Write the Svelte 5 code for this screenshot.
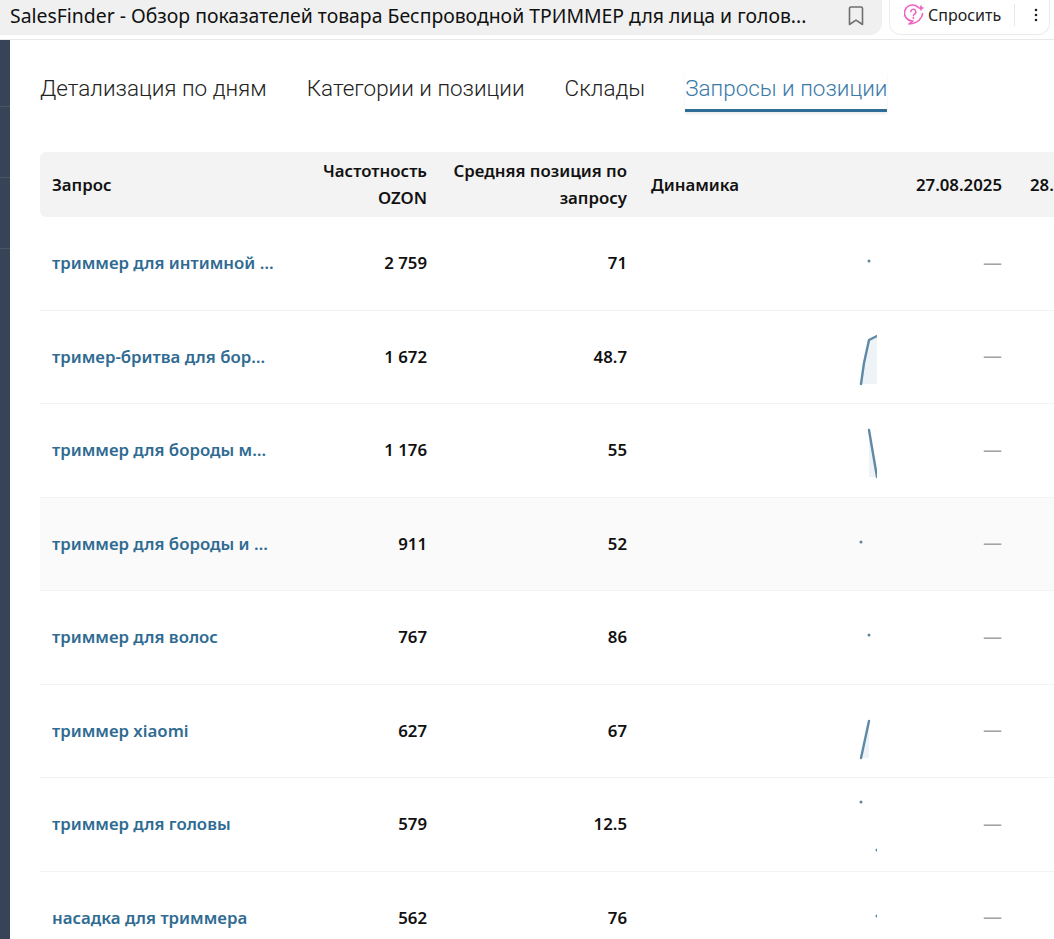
<script lang="ts">
	const tabs = ['Детализация по дням', 'Категории и позиции', 'Склады', 'Запросы и позиции'];
	const activeTab = 'Запросы и позиции';

	// spark: points in a 27x60 box, a single point is drawn as a dot
	const rows = [
		{ query: 'триммер для интимной …', freq: '2 759', pos: '71', spark: [[19, 28]] },
		{ query: 'тример-бритва для бор…', freq: '1 672', pos: '48.7', spark: [[11, 57], [14, 36], [19, 13], [27, 9]] },
		{ query: 'триммер для бороды м…', freq: '1 176', pos: '55', spark: [[19, 10], [27, 57]] },
		{ query: 'триммер для бороды и …', freq: '911', pos: '52', spark: [[11, 28]], hover: true },
		{ query: 'триммер для волос', freq: '767', pos: '86', spark: [[19, 28]] },
		{ query: 'триммер xiaomi', freq: '627', pos: '67', spark: [[11, 57], [19, 20]] },
		{ query: 'триммер для головы', freq: '579', pos: '12.5', dots: [[11, 8], [27, 56]] },
		{ query: 'насадка для триммера', freq: '562', pos: '76', spark: [[27, 28]] }
	];

	const line = (pts: number[][]) => pts.map((p) => p.join(',')).join(' ');
	const area = (pts: number[][]) =>
		`${line(pts)} ${pts[pts.length - 1][0]},57 ${pts[0][0]},57`;
</script>

<div class="topbar">
	<div class="title-pill">
		<span class="page-title">SalesFinder - Обзор показателей товара Беспроводной ТРИММЕР для лица и голов...</span>
		<svg class="bookmark" width="16" height="20" viewBox="0 0 16 20" aria-hidden="true">
			<path d="M1.5 2.5 a1.5 1.5 0 0 1 1.5-1.5 h10 a1.5 1.5 0 0 1 1.5 1.5 V18.5 L8 14.2 L1.5 18.5 Z" fill="none" stroke="#6f6f6f" stroke-width="1.6" stroke-linejoin="round" />
		</svg>
	</div>
	<div class="ask-pill">
		<svg width="21" height="22" viewBox="0 0 21 22" aria-hidden="true">
			<path d="M14 3.2 A8 8 0 1 0 9 17 L5 20 C9 20 15 18 17.5 13 Q18.500 11 18.500 9.500" fill="none" stroke="#f062c0" stroke-width="1.6" stroke-linecap="round" stroke-linejoin="round" />
			<path d="M6.800 7.800 a2.500 2.500 0 1 1 3.600 2.300 q-1 .5 -1 1.700" fill="none" stroke="#f062c0" stroke-width="1.500" stroke-linecap="round" />
			<circle cx="9.400" cy="14" r="1" fill="#f062c0" />
			<path d="M17 0.500 L18 3 L20.500 4 L18 5 L17 7.500 L16 5 L13.500 4 L16 3 Z" fill="#f062c0" />
		</svg>
		<span class="ask-label">Спросить</span>
		<span class="ask-divider"></span>
		<svg width="4" height="14" viewBox="0 0 4 14" aria-hidden="true">
			<circle cx="2" cy="2" r="1.300" fill="#222" />
			<circle cx="2" cy="7" r="1.300" fill="#222" />
			<circle cx="2" cy="12" r="1.300" fill="#222" />
		</svg>
	</div>
</div>

<div class="page">
	<aside class="sidebar">
		<div></div>
		<div></div>
		<div></div>
	</aside>

	<main class="content">
		<nav class="tabs">
			{#each tabs as tab}
				<span class="tab" class:active={tab === activeTab}>{tab}</span>
			{/each}
		</nav>

		<table class="positions">
			<colgroup>
				<col class="c-query" />
				<col class="c-freq" />
				<col class="c-pos" />
				<col class="c-spark" />
				<col class="c-date" />
				<col class="c-date" />
			</colgroup>
			<thead>
				<tr>
					<th>Запрос</th>
					<th class="num">Частотность<br />OZON</th>
					<th class="num">Средняя позиция по запросу</th>
					<th>Динамика</th>
					<th class="num">27.08.2025</th>
					<th class="num">28.08.2025</th>
				</tr>
			</thead>
			<tbody>
				{#each rows as row}
					<tr class:hover={row.hover}>
						<td><span class="query">{row.query}</span></td>
						<td class="num">{row.freq}</td>
						<td class="num">{row.pos}</td>
						<td class="spark-cell">
							<svg class="spark" width="27" height="60" viewBox="0 0 27 60" aria-hidden="true">
								{#if row.dots}
									{#each row.dots as d}
										<circle cx={d[0]} cy={d[1]} r="1.500" fill="#5f84a0" />
									{/each}
								{:else if row.spark.length === 1}
									<circle cx={row.spark[0][0]} cy={row.spark[0][1]} r="1.500" fill="#5f84a0" />
								{:else}
									<polygon points={area(row.spark)} fill="#eef3f7" />
									<polyline points={line(row.spark)} fill="none" stroke="#6089a6" stroke-width="2.400" stroke-linejoin="round" stroke-linecap="round" />
								{/if}
							</svg>
						</td>
						<td class="num dash">—</td>
						<td class="num dash">—</td>
					</tr>
				{/each}
			</tbody>
		</table>
	</main>
</div>

<style>
	:global(body) {
		margin: 0;
		background: #fff;
		overflow: hidden;
	}

	.topbar {
		height: 40px;
		box-sizing: border-box;
		display: flex;
		gap: 7px;
		align-items: flex-start;
		border-bottom: 1px solid #e8e8e8;
		background: #fff;
		font-family: 'Noto Sans', sans-serif;
	}

	.title-pill {
		width: 882px;
		height: 35px;
		flex: none;
		box-sizing: border-box;
		padding: 0 18px 4px 10px;
		display: flex;
		align-items: center;
		justify-content: space-between;
		background: #f0f0f0;
		border-bottom-right-radius: 12px;
	}

	.page-title {
		font-size: 19.4px;
		color: #111;
		white-space: nowrap;
	}

	.bookmark {
		flex: none;
	}

	.ask-pill {
		width: 161px;
		height: 35px;
		box-sizing: border-box;
		padding: 0 0 4px 14px;
		display: flex;
		align-items: center;
		border: 1px solid #ececec;
		border-top: none;
		border-radius: 0 0 12px 12px;
		flex: none;
	}

	.ask-label {
		margin-left: 3px;
		font-size: 16px;
		color: #222;
	}

	.ask-divider {
		width: 1px;
		height: 22px;
		margin: 0 19px 0 13px;
		background: #e6e6e6;
	}

	.page {
		display: flex;
		height: 899px;
		overflow: hidden;
	}

	.sidebar {
		width: 10px;
		flex: none;
		background: #374357;
	}

	.sidebar div {
		height: 70px;
		border-bottom: 1px solid #4a5568;
	}

	.sidebar div:first-child {
		height: 66px;
	}

	.content {
		flex: 1;
		min-width: 0;
		padding-left: 30px;
		overflow: hidden;
	}

	.tabs {
		display: flex;
		gap: 40px;
		height: 112px;
		box-sizing: border-box;
		padding-top: 32px;
		font-family: Roboto, sans-serif;
		font-weight: 300;
		font-size: 22.45px;
		color: #222;
	}

	.tab {
		height: 40px;
		box-sizing: border-box;
		line-height: 33px;
		white-space: nowrap;
	}

	.tab.active {
		color: #3b7aa8;
		border-bottom: 3px solid #2f6d96;
		box-shadow: 0 2px 2px rgba(0, 0, 0, 0.08);
	}

	.positions {
		table-layout: fixed;
		width: 1088px;
		border-collapse: separate;
		border-spacing: 0;
		font-family: 'Noto Sans', sans-serif;
		font-size: 16.8px;
		font-weight: 600;
		color: #111;
	}

	.c-query { width: 250px; }
	.c-freq { width: 149px; }
	.c-pos { width: 200px; }
	.c-spark { width: 261px; }
	.c-date { width: 114px; }

	th {
		height: 65px;
		box-sizing: border-box;
		padding: 0 12px 1px;
		text-align: left;
		background: #f3f3f3;
		line-height: 27px;
		font-weight: 600;
		white-space: normal;
	}

	th:first-child {
		border-radius: 6px 0 0 6px;
	}

	td {
		height: 93.500px;
		box-sizing: border-box;
		padding: 0 12px 1px;
		border-bottom: 1px solid #f3f3f3;
		white-space: nowrap;
	}

	tr.hover td {
		background: #fafafa;
	}

	.num {
		text-align: right;
	}

	.query {
		color: #2f6b92;
	}

	.dash {
		color: #a3a3a3;
		font-size: 19px;
		font-weight: 400;
	}

	.spark-cell {
		padding: 0 0 0 211px;
		line-height: 0;
	}

	.spark {
		display: block;
	}
</style>
